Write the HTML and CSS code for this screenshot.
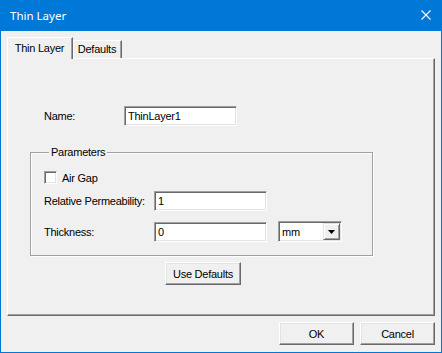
FILE: index.html
```html
<!doctype html>
<html lang="en">

<head>
    <meta charset="utf-8">
    <title>Thin Layer</title>
    <meta name="viewport" content="width=device-width, initial-scale=1">
    <link rel="stylesheet" href="styles.css">
</head>

<body>
    <div class="window">
        <div class="titlebar">
            <span class="titlebar__text">Thin Layer</span>
            <svg class="titlebar__close" width="10" height="10" viewBox="0 0 10 10">
                <path d="M0.5 0.5L9.5 9.5M9.5 0.5L0.5 9.5" stroke="#fff" stroke-width="1.1" fill="none" />
            </svg>
        </div>
        <div class="client">
            <div class="tabs">
                <div class="tab tab--active">Thin Layer</div>
                <div class="tab">Defaults</div>
            </div>
            <div class="pane">
                <div class="row row--name">
                    <span class="label label--name">Name:</span>
                    <div class="edit">ThinLayer1</div>
                </div>
                <fieldset class="group">
                    <legend class="group__title">Parameters</legend>
                    <div class="check">
                        <span class="check__box"></span>
                        <span class="check__text">Air Gap</span>
                    </div>
                    <div class="row row--perm">
                        <span class="label">Relative Permeability:</span>
                        <div class="edit">1</div>
                    </div>
                    <div class="row row--thick">
                        <span class="label">Thickness:</span>
                        <div class="edit">0</div>
                        <div class="combo">
                            <span class="combo__text">mm</span>
                            <span class="combo__btn">
                                <svg width="7" height="4" viewBox="0 0 7 4">
                                    <path d="M0 0H7L3.5 4Z" fill="#000" />
                                </svg>
                            </span>
                        </div>
                    </div>
                </fieldset>
                <button class="btn btn--defaults">Use Defaults</button>
            </div>
            <div class="footer">
                <button class="btn">OK</button>
                <button class="btn">Cancel</button>
            </div>
        </div>
    </div>
</body>

</html>
```

FILE: styles.css
```css
* {
    padding: 0;
    margin: 0;
    box-sizing: border-box;
}

body {
    background-color: #f0f0f0;
    font-family: "Liberation Sans", Arial, sans-serif;
    font-size: 11px;
    letter-spacing: -0.25px;
    color: #000;
}

.window {
    width: 442px;
    height: 353px;
    border: 1px solid #0078d7;
    background-color: #f0f0f0;
}

.titlebar {
    height: 30px;
    background-color: #0078d7;
    display: flex;
    align-items: center;
    justify-content: space-between;
    padding: 0 10px 0 9px;
}

.titlebar__text {
    font-family: "Noto Sans", "Liberation Sans", sans-serif;
    font-size: 11.5px;
    letter-spacing: 0;
    color: #fff;
    margin-top: -1px;
}

.titlebar__close {
    display: block;
    margin-bottom: 2px;
}

.client {
    padding: 6px 6px 0 6px;
}

.tabs {
    display: flex;
    align-items: flex-end;
    height: 21px;
}

.tab {
    height: 18px;
    width: 49px;
    text-align: center;
    line-height: 17px;
    border-top: 1px solid #fff;
    border-left: 1px solid #fff;
    border-right: 1px solid #696969;
    box-shadow: inset -1px 0 #a0a0a0;
    padding-right: 1px;
}

.tab--active {
    position: relative;
    z-index: 1;
    width: 66px;
    height: 22px;
    line-height: 20px;
    margin-bottom: -1px;
    background-color: #f0f0f0;
}

.pane {
    height: 258px;
    border-top: 1px solid #fff;
    border-left: 1px solid #fff;
    border-right: 1px solid #696969;
    border-bottom: 1px solid #696969;
    box-shadow: inset -1px -1px #a0a0a0;
}

.row {
    display: flex;
    align-items: center;
}

.row--name {
    margin-top: 47px;
    padding-left: 36px;
}

.label {
    width: 110px;
    flex-shrink: 0;
}

.label--name {
    width: 80px;
}

.edit {
    width: 113px;
    height: 20px;
    background-color: #fff;
    border-top: 1px solid #a0a0a0;
    border-left: 1px solid #a0a0a0;
    border-right: 1px solid #fff;
    border-bottom: 1px solid #fff;
    box-shadow: inset 1px 1px #696969, inset -1px -1px #e3e3e3;
    padding: 2px 0 0 3px;
    line-height: 15px;
    white-space: nowrap;
}

.group {
    width: 343px;
    margin: 20px 0 0 22px;
    padding: 12px 0 13px 13px;
    border: 1px solid #a0a0a0;
    box-shadow: inset 1px 1px #fff, 1px 1px 0 #fff;
}

.group__title {
    margin-left: 5px;
    padding: 0 2px;
    line-height: 13px;
    background-color: #f0f0f0;
}

.check {
    display: flex;
    align-items: center;
    height: 13px;
}

.check__box {
    width: 13px;
    height: 13px;
    background-color: #fff;
    border-top: 1px solid #a0a0a0;
    border-left: 1px solid #a0a0a0;
    border-right: 1px solid #fff;
    border-bottom: 1px solid #fff;
    box-shadow: inset 1px 1px #696969, inset -1px -1px #e3e3e3;
}

.check__text {
    margin-left: 5px;
}

.row--perm {
    margin-top: 7px;
}

.row--thick {
    margin-top: 10px;
}

.combo {
    display: flex;
    align-items: center;
    justify-content: space-between;
    width: 64px;
    height: 21px;
    margin-left: 11px;
    background-color: #fff;
    border-top: 1px solid #a0a0a0;
    border-left: 1px solid #a0a0a0;
    border-right: 1px solid #fff;
    border-bottom: 1px solid #fff;
    box-shadow: inset 1px 1px #696969, inset -1px -1px #e3e3e3;
    padding: 1px 1px 1px 3px;
}

.combo__text {
    margin-top: 1px;
}

.combo__btn {
    display: flex;
    align-items: center;
    justify-content: center;
    width: 17px;
    height: 17px;
    background-color: #f0f0f0;
    border-top: 1px solid #e3e3e3;
    border-left: 1px solid #e3e3e3;
    border-right: 1px solid #696969;
    border-bottom: 1px solid #696969;
    box-shadow: inset 1px 1px #fff, inset -1px -1px #a0a0a0;
}

.combo__btn svg {
    display: block;
}

.btn {
    display: block;
    width: 75px;
    height: 23px;
    font-family: inherit;
    font-size: 11px;
    letter-spacing: inherit;
    color: #000;
    background-color: #f0f0f0;
    border-top: 1px solid #fff;
    border-left: 1px solid #fff;
    border-right: 1px solid #696969;
    border-bottom: 1px solid #696969;
    box-shadow: inset -1px -1px #a0a0a0, inset 1px 1px #e3e3e3;
    outline: none;
}

.btn--defaults {
    width: 76px;
    margin: 6px 0 0 157px;
}

.footer {
    display: flex;
    justify-content: flex-end;
    gap: 6px;
    margin-top: 6px;
}
```
